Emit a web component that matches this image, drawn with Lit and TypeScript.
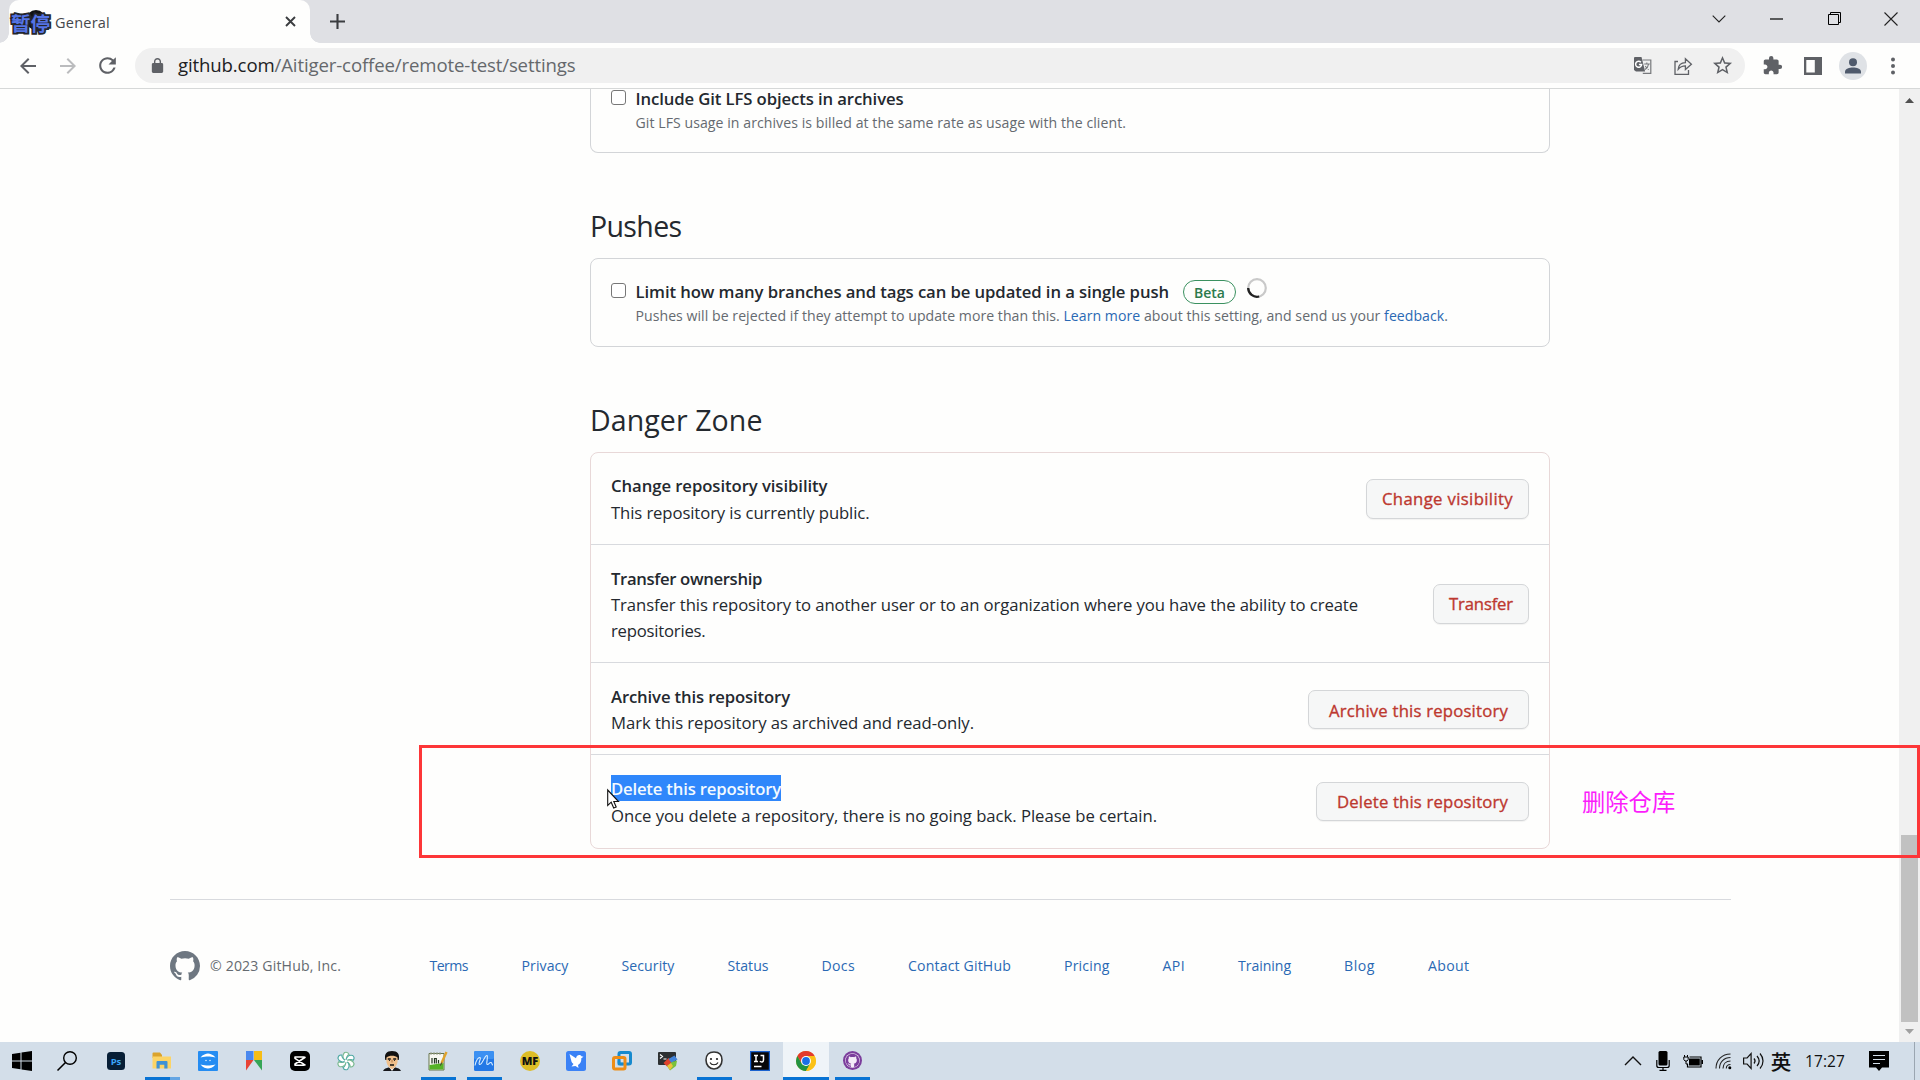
import { LitElement, html, css, svg } from "lit";
import { customElement, property } from "lit/decorators.js";
import { classMap } from "lit/directives/class-map.js";

/* A run of text whose tracking is tuned so that it takes a given width. */
@customElement("fit-text")
class FitText extends LitElement {
  @property({ type: Number }) w = 0;
  static styles = css`
    :host { display: inline-block; white-space: nowrap; }
  `;
  render() {
    return html`<slot></slot>`;
  }
  firstUpdated() {
    requestAnimationFrame(() => this.fit());
    this.fit();
  }
  fit() {
    const chars = (this.textContent ?? "").trim().length;
    if (!this.w || !chars) return;
    this.style.letterSpacing = "0px";
    const natural = this.getBoundingClientRect().width;
    this.style.letterSpacing = `${(this.w - natural) / chars}px`;
  }
}

const icon = (w: number, h: number, body: unknown, vb = `0 0 ${w} ${h}`) =>
  html`<svg class="icon" width=${w} height=${h} viewBox=${vb} fill="none">${body}</svg>`;

const octocat = "M8 0C3.58 0 0 3.58 0 8c0 3.54 2.29 6.53 5.47 7.59.4.07.55-.17.55-.38 0-.19-.01-.82-.01-1.49-2.01.37-2.53-.49-2.69-.94-.09-.23-.48-.94-.82-1.13-.28-.15-.68-.52-.01-.53.63-.01 1.08.58 1.23.82.72 1.21 1.87.87 2.33.66.07-.52.28-.87.51-1.07-1.78-.2-3.64-.89-3.64-3.95 0-.87.31-1.59.82-2.15-.08-.2-.36-1.02.08-2.12 0 0 .67-.21 2.2.82.64-.18 1.32-.27 2-.27s1.36.09 2 .27c1.53-1.04 2.2-.82 2.2-.82.44 1.1.16 1.92.08 2.12.51.56.82 1.27.82 2.15 0 3.07-1.87 3.75-3.65 3.95.29.25.54.73.54 1.48 0 1.07-.01 1.93-.01 2.2 0 .21.15.46.55.38A8.01 8.01 0 0 0 16 8c0-4.42-3.58-8-8-8z";

const nav = {
  back: icon(24, 24, svg`<path fill="#5f6166" d="M20 11H7.83l5.59-5.59L12 4l-8 8 8 8 1.41-1.41L7.83 13H20v-2z"/>`),
  forward: icon(24, 24, svg`<path fill="#bbbcbe" d="M12 4l-1.41 1.41L16.17 11H4v2h12.17l-5.58 5.59L12 20l8-8z"/>`),
  reload: icon(25, 25, svg`<path fill="#5f6166" d="M17.65 6.35A7.958 7.958 0 0012 4c-4.42 0-7.99 3.58-7.99 8s3.57 8 7.99 8c3.73 0 6.84-2.55 7.73-6h-2.08A5.99 5.99 0 0112 18c-3.31 0-6-2.69-6-6s2.69-6 6-6c1.66 0 3.14.69 4.22 1.78L13 11h7V4l-2.35 2.35z"/>`, "0 0 24 24"),
  lock: icon(17, 17, svg`<path fill="#5f6166" d="M18 8h-1V6c0-2.76-2.24-5-5-5S7 3.240 7 6v2H6c-1.100 0-2 .9-2 2v10c0 1.100.9 2 2 2h12c1.100 0 2-.9 2-2V10c0-1.100-.9-2-2-2zM9 6c0-1.660 1.340-3 3-3s3 1.340 3 3v2H9V6z"/>`, "0 1 24 21"),
};

const omniActions = [
  icon(20, 20, svg`
    <path d="M9.500 4h8.300v13.300H9.800" stroke="#77797c" stroke-width="1.200"/>
    <path fill="#5f6166" d="M1.500 1h7l3.600 14.500H3L1 14V1.500z"/>
    <path d="M7.900 6.300A3 3 0 1 0 8.600 8.600H5.900" stroke="#fff" stroke-width="1.500"/>
    <path d="M11.200 8h5.600M13.800 6.500V8M12 13.500c2-1.200 3.200-3 3.500-5.300M12.300 10c.8 1.500 2 2.800 3.500 3.600" stroke="#77797c" stroke-width="1.100"/>`),
  icon(20, 20, svg`
    <path d="M5 5.500H2v12.800h13.500V14" stroke="#5f6166" stroke-width="1.300"/>
    <path d="M5.200 13.300c.3-4.400 3-6.600 7.200-6.700V2.800l6 5.400-6 5.400V9.900c-3.200 0-5.300 1-7.200 3.400z" stroke="#5f6166" stroke-width="1.300"/>`),
  icon(21, 21, svg`<path fill="#5f6166" d="M22 9.240l-7.190-.62L12 2 9.190 8.630 2 9.240l5.460 4.730L5.820 21 12 17.270 18.180 21l-1.630-7.030L22 9.240zM12 15.400l-3.760 2.270 1-4.280-3.320-2.880 4.380-.38L12 6.100l1.710 4.040 4.380.38-3.320 2.880 1 4.280L12 15.400z"/>`, "1 1 22 22"),
];

const toolbarActions = [
  icon(21, 21, svg`<path fill="#5f6166" d="M20.500 11H19V7c0-1.100-.9-2-2-2h-4V3.500a2.500 2.500 0 0 0-5 0V5H4c-1.100 0-1.990.9-1.990 2v3.800H3.500c1.490 0 2.700 1.210 2.700 2.700s-1.210 2.700-2.700 2.700H2V20c0 1.100.9 2 2 2h3.800v-1.500c0-1.490 1.210-2.700 2.700-2.700s2.700 1.210 2.700 2.700V22H17c1.100 0 2-.9 2-2v-4h1.500a2.500 2.500 0 0 0 0-5z"/>`, "0 0 24 24"),
  icon(18, 18, svg`<path fill="#5f6166" fill-rule="evenodd" d="M0 0h18v18H0zM2.300 3v12.500h8.500V3z"/>`),
  icon(28, 28, svg`<circle cx="14" cy="14" r="14" fill="#dfe2e6"/><circle cx="14" cy="10.200" r="4" fill="#4f5a6c"/><path fill="#4f5a6c" d="M6 21.500v-1.700c0-3 4.500-4.300 8-4.300s8 1.300 8 4.300v1.700z"/>`),
  icon(4, 18, svg`<g fill="#5f6166"><circle cx="2" cy="2.500" r="2"/><circle cx="2" cy="9" r="2"/><circle cx="2" cy="15.500" r="2"/></g>`),
];

const windowControls = [
  icon(14, 8, svg`<path d="M.7.700L7 7 13.300.700" stroke="#222" stroke-width="1.100"/>`),
  icon(13, 2, svg`<path d="M0 1h13" stroke="#000" stroke-width="1.200"/>`),
  icon(13, 13, svg`<path d="M.5 2.500h10v10H.5zM2.500 2.500v-2h10v10h-2" stroke="#000"/>`),
  icon(14, 14, svg`<path d="M.5.500l13 13M13.500.500l-13 13" stroke="#222" stroke-width="1.100"/>`),
];

interface Task { art: unknown; state?: "open" | "grouped" | "active"; }

const tasks: Task[] = [
  { art: icon(18, 18, svg`<rect width="18" height="18" rx="3.500" fill="#071e36"/><text x="9" y="12.500" text-anchor="middle" font-family="Open Sans, sans-serif" font-weight="700" font-size="9.500" fill="#3aa5f8">Ps</text>`) },
  { state: "grouped", art: icon(20, 17, svg`<path fill="#dba32c" d="M.5 1.500A1 1 0 0 1 1.500.500h6.500l2 2.500v3H.5z"/><path fill="#fcd466" d="M.5 4.500h18.500v12H.5z"/><path fill="#3f92d6" d="M4.500 16.500V10a1 1 0 0 1 1-1h9a1 1 0 0 1 1 1v6.500h-3.200v-3.700H7.700v3.700z"/>`) },
  { art: icon(20, 20, svg`<rect width="20" height="20" rx="1" fill="#248cf2"/><path d="M2.500 6.500C5 3.500 8 2.500 10 2.500s5 1 7.500 4C14 5.800 12 5.500 10 5.500s-4 .3-7.500 1zM2.500 13.500c2.500 3 5.500 4 7.500 4s5-1 7.500-4c-3.500.7-5.500 1-7.500 1s-4-.3-7.500-1z" fill="#fff"/><circle cx="8" cy="9.500" r=".7" fill="#fff"/><circle cx="12" cy="9.500" r=".7" fill="#fff"/>`) },
  { art: icon(16, 20, svg`<path fill="#4a88ee" d="M0 0h7.500v9H0z"/><path fill="#f7bd16" d="M8 0h8v9H8z"/><path fill="#e84335" d="M0 9h7.500L0 19.500z"/><path fill="#35a556" d="M8 9h8v10.500z"/>`) },
  { art: icon(20, 20, svg`<rect width="20" height="20" rx="5" fill="#000"/><path d="M15.500 6L5 13v1.300h8.700V13M15.500 14.300L5 7.300V6h8.700v1.300" stroke="#fff" stroke-width="1.600" stroke-linejoin="round"/>`) },
  { art: icon(20, 20, svg`${[0, 60, 120, 180, 240, 300].map(
      (a) => svg`<path transform="rotate(${a} 10 10)" d="M10 9.500C6.500 8.500 6 4 8.500 1.500c2.500-.8 4 .5 4.500 2-2 .8-2.700 3-3 6z" fill="#fff" stroke=${a % 120 ? "#4fa9a4" : "#79b98f"} stroke-width="1.100"/>`)}<circle cx="10" cy="10" r="1.500" fill="#fff"/>`) },
  { art: icon(20, 20, svg`<path fill="#17171b" d="M1 20c1-2.500 3.500-3 5.500-3.500h7C15.500 17 18 17.500 19 20z"/><path fill="#fff" d="M7 16h6l-3 4z"/><path fill="#111" d="M3.300 9C2 3 4.500 0 10 0s8 3 6.700 9z"/><path fill="#efc08d" d="M4.500 6.500C7 4 13 4 15.500 6.500c.5 4 0 6.500-2 9L10 18.500l-3.500-3C4.500 13 4 10.500 4.500 6.500z"/><path d="M5.800 8h3M11.200 8h3M8 14h4" stroke="#111" stroke-width="1.300"/><path d="M10 8.500v3" stroke="#b77a47"/><circle cx="7.500" cy="9.500" r=".6" fill="#111"/><circle cx="12.500" cy="9.500" r=".6" fill="#111"/>`) },
  { state: "open", art: icon(20, 20, svg`<path fill="#f8f8f2" stroke="#66754c" d="M1 2.500h15V19H1z"/><path fill="#56b327" d="M1.500 14l14-2v6.500h-14z"/><path d="M3 1v3M6 1v3M9 1v3M12 1v3" stroke="#9ba090"/><path d="M4 12.500V7M6.500 12.500V7.500h1.800v5M10.500 12.500V9" stroke="#263822" stroke-width="1.200"/><path d="M18.500 1l-5 11" stroke="#e0a22c" stroke-width="2.400"/><path d="M13.700 11.500l-1.200 3" stroke="#433"/>`) },
  { state: "open", art: icon(20, 20, svg`<rect width="20" height="20" rx="1.500" fill="#2378e6"/><rect width="20" height="8" rx="1.500" fill="#3b90f2"/><path d="M1 14.500C2 9 4.500 6 6 6.500c1.800.8-2.500 6-.5 7C8 14.500 11 3.500 13 4.500c1.500 1-1.500 9 .5 9 1.500 0 2-2.500 3.500-2s.5 2.500 2 2.500" stroke="#d9edff" stroke-width="1.100"/>`) },
  { art: icon(20, 20, svg`<circle cx="10" cy="10" r="10" fill="#ddbd26"/><text x="10" y="14" text-anchor="middle" font-family="Open Sans, sans-serif" font-weight="800" font-size="11" fill="#111">MF</text>`) },
  { art: icon(20, 20, svg`<rect width="20" height="20" rx="2.500" fill="#3b82f6"/><path fill="#fff" d="M3.500 3l6.500 4.200C10.500 5 12 3.800 13.500 4c1 0 1.600.6 2 1.300l2 .4-2.200 1.500c.3 3-.8 5.300-3.300 6.800l.5 3-3-2-4 .5 2-2.500C5 11.500 5.500 9.500 4.800 8z"/>`) },
  { art: icon(20, 20, svg`<rect x="7" y="1.500" width="11.500" height="11.500" rx="1.500" stroke="#168ace" stroke-width="3"/><rect x="1.500" y="6.500" width="11.500" height="11.500" rx="1.500" stroke="#ee8d16" stroke-width="3"/><path d="M7 9.500V13h4" stroke="#168ace" stroke-width="2.500"/>`) },
  { art: icon(20, 20, svg`<rect y="1" width="18" height="13" rx="1" fill="#2d3032"/><path d="M2 3.500l2.500 2L2 7.500M5.500 8h3" stroke="#fff" stroke-width="1.200"/><path fill="#e0432d" d="M5.500 12l5-5 4 4-5 5z"/><path fill="#4383d8" d="M10.500 8l6-3.500 3 4-6 3.500z"/><path fill="#79c13c" d="M9 15l5-4 5-1.500-1 5.500-6 4.500z"/><path fill="#eac33b" d="M9 15l4-3 2 3-3 4z"/>`) },
  { state: "open", art: icon(18, 19, svg`<path d="M9 1c5 0 8 3 8 8s-3.500 9-8 9-8-4-8-9 3-8 8-8z" fill="#fff" stroke="#333" stroke-width="1.600"/><circle cx="6" cy="8" r="1.100" fill="#222"/><circle cx="12" cy="8" r="1.100" fill="#222"/><path d="M5 11.500c1.500 3 6.500 3 8 0" stroke="#222" stroke-width="1.200"/>`) },
  { art: icon(20, 20, svg`<path fill="#060608" stroke="#1b62cf" stroke-width="1.200" d="M.6.600h18.800v18.800H.6z"/><path d="M4 4.500h4M6 4.500v6M4 10.500h4M10.500 4.500h3v4.500c0 1.300-.8 2-1.800 2-.7 0-1.300-.3-1.700-1M4 15.500h7.500" stroke="#fff" stroke-width="1.500"/>`) },
  { state: "active", art: icon(20, 20, svg`<circle cx="10" cy="10" r="10" fill="#fbc116"/><path fill="#e33b2e" d="M1.340 5A10 10 0 0 1 18.660 5H10L5.670 12.500z"/><path fill="#229342" d="M1.340 5A10 10 0 0 0 10 20l4.330-7.500H5.670z"/><path fill="#fbc116" d="M18.660 5A10 10 0 0 1 10 20l4.330-7.500L10 5z"/><circle cx="10" cy="10" r="5" fill="#fff"/><circle cx="10" cy="10" r="3.900" fill="#1a6fe6"/>`) },
  { state: "open", art: icon(19, 19, svg`<circle cx="9.500" cy="9.500" r="9.500" fill="#7b3d9c"/><circle cx="9.500" cy="9.500" r="7.300" fill="#f4ecf8"/><g transform="translate(2.700 2.700) scale(.85)"><path fill="#7b3d9c" d=${octocat}/></g>`) },
];

const tray = {
  up: icon(18, 10, svg`<path d="M1 9l8-8 8 8" stroke="#111" stroke-width="1.400"/>`),
  mic: icon(14, 20, svg`<rect x="2.500" width="9" height="14.500" rx="1.500" fill="#000"/><path d="M.8 9v5.500c0 1.200.7 2 2 2h8.400c1.300 0 2-.8 2-2V9M7 16.500v3M3.500 19.300h7" stroke="#000" stroke-width="1.200"/>`),
  battery: icon(20, 13, svg`<path d="M6.500 2h11.500v10H4.500V9" stroke="#000" stroke-width="1.200"/><path fill="#000" d="M6 3.500h10.800v7H6zM18.500 5h1.500v4h-1.500z"/><path d="M1.500 0v2M4.500 0v2M.8 2h4.400v2.500L4 6H2L.8 4.500zM3 6v3h2" stroke="#000"/>`),
  wifi: icon(17, 17, svg`<path d="M1 15.500C1 7 7 1 15.500 1M4.500 15.500C4.500 9 9 4.500 15.500 4.500M8 15.500c0-4.500 3-7.500 7.500-7.500M11.300 15.500c0-2.500 1.700-4 4.200-4" stroke="#222" stroke-width="1.100"/><circle cx="14.800" cy="14.800" r="1.500" fill="#000"/>`),
  sound: icon(21, 18, svg`<path d="M.6 6h3.500l4-4.500v15l-4-4.500H.6z" stroke="#111" stroke-width="1.200"/><path d="M11 6.500c1.300 1.500 1.300 3.500 0 5M14 4c2.600 3 2.600 7 0 10M17 1.500c4 4.500 4 10.500 0 15" stroke="#111" stroke-width="1.200"/>`),
  note: icon(20, 20, svg`<path fill="#000" d="M0 0h20v16.500h-7L10 20l-3-3.500H0z"/><path d="M4 4.500h12M4 8.500h12M4 12.500h7" stroke="#d3dee9" stroke-width="1.200"/>`),
};

const dangerRows = [
  { title: "Change repository visibility", tw: 216.5, lines: [["This repository is currently public.", 258.5]], button: "Change visibility", bw: 131, size: "first" },
  { title: "Transfer ownership", tw: 151, lines: [["Transfer this repository to another user or to an organization where you have the ability to create", 747], ["repositories.", 94.5]], button: "Transfer", bw: 64, size: "tall" },
  { title: "Archive this repository", tw: 179, lines: [["Mark this repository as archived and read-only.", 363]], button: "Archive this repository", bw: 179, size: "mid" },
  { title: "Delete this repository", tw: 170, lines: [["Once you delete a repository, there is no going back. Please be certain.", 546]], button: "Delete this repository", bw: 171, size: "last" },
] as const;

/* label, text width, gap that follows */
const footerLinks: [string, number, number][] = [
  ["Terms", 38.500, 53.500], ["Privacy", 47, 53], ["Security", 53, 53], ["Status", 41, 53],
  ["Docs", 33.500, 53], ["Contact GitHub", 103, 53], ["Pricing", 45.500, 53], ["API", 22.500, 53],
  ["Training", 53, 53], ["Blog", 31, 53], ["About", 41.500, 0],
];

@customElement("app-root")
class AppRoot extends LitElement {
  static styles = css`
    :host {
      display: flex; flex-direction: column; position: relative;
      width: 1920px; height: 1080px; overflow: hidden;
      background: #fefefd; color: #24292f;
      font-family: "Open Sans", "Noto Sans", "Noto Sans CJK SC", sans-serif;
    }
    * { box-sizing: border-box; }
    .icon { display: block; flex: none; overflow: visible; }
    .cell { display: flex; align-items: center; justify-content: center; flex: none; }

    .strip { display: flex; height: 43px; flex: none; background: #dfe0e4; padding-left: 9px; }
    .tab {
      position: relative; display: flex; align-items: center; width: 301px; height: 43px;
      background: #fefefd; border-radius: 10px 10px 0 0; padding: 0 14px 7px 2px;
    }
    .tab::before, .tab::after {
      content: ""; position: absolute; bottom: 0; width: 10px; height: 10px;
    }
    .tab::before { left: -10px; background: radial-gradient(circle at 0 0, #dfe0e4 9.500px, #fefefd 10px); }
    .tab::after { right: -10px; background: radial-gradient(circle at 100% 0, #dfe0e4 9.500px, #fefefd 10px); }
    .favicon {
      position: relative; width: 40px; height: 24px; margin: 9px 4px 0 0; flex: none;
      font: 700 19.500px/23px "Noto Sans CJK SC", sans-serif; color: #5474e6;
      -webkit-text-stroke: 3.500px #24262c; paint-order: stroke fill; white-space: nowrap;
    }
    .favicon::before {
      content: ""; position: absolute; left: 15px; top: -1px; width: 20px; height: 20px;
      border-radius: 50%; background: #101114; z-index: 0;
    }
    .favicon span { position: relative; z-index: 1; }
    .tabname { flex: 1; font-size: 14.500px; line-height: 20px; color: #45474b; padding-top: 10px; }
    .tabclose { padding-top: 7px; }
    .newtab { width: 54px; height: 43px; }
    .grow { flex: 1; }
    .win { width: 57.300px; height: 37px; }

    .toolbar {
      display: flex; align-items: center; height: 46px; flex: none;
      padding: 0 7.500px; border-bottom: 1px solid #d6d8d8;
    }
    .tool { width: 40px; height: 40px; }
    .omnibox {
      display: flex; align-items: center; flex: 1; height: 35px; margin: 0 7.500px;
      background: #f0f0f0; border-radius: 18px; padding: 0 2.500px 0 14px;
    }
    .url { flex: 1; padding: 0 0 2px 12px; font-size: 18.600px; line-height: 26px; color: #65686c; }
    .url b { font-weight: 400; color: #202124; }

    .view { display: flex; height: 953px; flex: none; }
    .page { flex: 1; display: flex; flex-direction: column; }
    .column { width: 960px; margin-left: 590px; flex: none; }
    .box { border: 1px solid #d3d5d8; border-radius: 8px; }
    .option { display: grid; grid-template-columns: 15px 1fr; column-gap: 9.500px; padding-left: 20px; }
    .option.cut { border-top: 0; border-radius: 0 0 8px 8px; height: 64px; }
    .option.full { height: 89px; padding-top: 23px; }
    .check {
      appearance: none; margin: 1px 0 0; width: 15px; height: 15px;
      border: 1.300px solid #777; border-radius: 3px; background: #fff;
    }
    .label { display: flex; height: 20px; font-size: 16.700px; line-height: 20px; font-weight: 600; }
    .hint { font-size: 14.100px; line-height: 20px; color: #656a70; margin-top: 4px; }
    .pill {
      display: flex; justify-content: center; width: 53px; height: 24px; margin: -2px 11px 0 14px;
      border: 1.300px solid #3b9160; border-radius: 12px; color: #2c7a4c; font-size: 14px; line-height: 23px;
    }
    .spin { margin-top: -4px; }
    a { color: #2a69b4; text-decoration: none; }
    h2 { margin: 52px 0 11px; font-size: 28.500px; line-height: 42px; height: 42px; font-weight: 400; }

    .danger { border-color: #e8d8d8; }
    .row {
      display: flex; justify-content: space-between; align-items: center;
      padding: 0 20px; border-top: 1px solid #d8dade; font-size: 16.700px; line-height: 26px;
    }
    .row.first { border-top: 0; height: 91px; }
    .row.tall { height: 118px; }
    .row.mid { height: 92px; }
    .row.last { height: 94px; }
    .copy { display: flex; flex-direction: column; align-self: flex-start; align-items: flex-start; padding-top: 21px; }
    .first .copy { padding-top: 20px; gap: 1px; }
    .title { font-weight: 600; height: 26px; }
    .copy div { height: 26px; }
    .last .copy { padding-top: 20px; gap: 1px; }
    .last .copy div { line-height: 27px; }
    .selected { background: #2f87fb; color: #f3faff; }
    button {
      display: flex; justify-content: center; align-items: center; height: 40px; padding: 0 15px;
      border: 1px solid #d4d6d8; border-radius: 7px; background: #f6f7f7; color: #bd382f;
      box-shadow: 0 1px 1px rgba(0, 0, 0, 0.05); font: 500 16.700px/26px "Open Sans", sans-serif;
      -webkit-text-stroke: 0.350px #bd382f;
    }
    .mid button, .last button { height: 39px; padding: 2px 20px 0; }
    .mid button { margin-top: 2px; }
    .last button { padding-top: 0; }

    footer {
      display: flex; align-items: center; width: 1561px; margin: 50px 0 0 170px; flex: none;
      border-top: 1px solid #d8dade; padding-top: 50px; font-size: 14.100px; line-height: 30px; color: #656a70;
    }
    .copyright { margin: 1px 88.500px 0 10px; width: 131px; }
    .links { display: flex; margin-top: 1px; }

    .scroll {
      display: flex; flex-direction: column; align-items: center; width: 21px; background: #f0f0f0;
      padding: 9px 0 8px;
    }
    .track { flex: 1; display: flex; align-items: flex-end; padding-bottom: 7px; }
    .thumb { width: 17px; height: 187px; background: #c1c1c1; }

    .taskbar { display: flex; align-items: stretch; height: 38px; flex: none; background: #d3dee9; }
    .sys { width: 45px; padding: 0 1px 1px 0; }
    .apps { display: flex; margin-left: 3px; }
    .task { width: 46px; padding-bottom: 1px; background-repeat: no-repeat; background-position: 6px 100%; background-size: 35px 3px; }
    .task.open { background-image: linear-gradient(#0873d4, #0873d4); }
    .task.grouped { background-image: linear-gradient(90deg, #0873d4 25px, #64a5e3 25px); }
    .task.active { background-color: #eff4f8; background-image: linear-gradient(#0873d4, #0873d4); background-size: 46px 3px; background-position: 0 100%; }
    .tray { display: flex; align-items: center; }
    .ime { width: 28px; text-align: center; font: 500 20.500px/36px "Noto Sans CJK SC", sans-serif; color: #111; }
    .clock { width: 64px; padding-left: 10px; font-size: 15.500px; line-height: 38px; color: #111; }
    .desk { width: 6px; height: 38px; border-left: 1px solid #9ba6b1; margin-left: 16px; }

    .callout {
      position: absolute; left: 419px; top: 745px; width: 1501px; height: 113px;
      border: 3px solid #fd3638;
    }
    .note {
      position: absolute; left: 1582px; top: 784px; white-space: nowrap;
      font: 400 23.300px/34px "Noto Sans CJK SC", sans-serif; color: #fb1dfb;
    }
    .cursor { position: absolute; left: 607px; top: 789px; }
  `;

  private browser() {
    return html`
      <div class="strip">
        <div class="tab">
          <div class="favicon"><span>暂停</span></div>
          <div class="tabname"><fit-text w="55">General</fit-text></div>
          <div class="tabclose">${icon(11, 11, svg`<path d="M1 1l9 9M10 1l-9 9" stroke="#3b3d40" stroke-width="1.900"/>`)}</div>
        </div>
        <div class="newtab cell">${icon(15, 15, svg`<path d="M7.500 0v15M0 7.500h15" stroke="#3b3d40" stroke-width="2.100"/>`)}</div>
        <div class="grow"></div>
        ${windowControls.map((i) => html`<div class="cell win">${i}</div>`)}
      </div>
      <div class="toolbar">
        <div class="cell tool">${nav.back}</div>
        <div class="cell tool">${nav.forward}</div>
        <div class="cell tool">${nav.reload}</div>
        <div class="omnibox">
          ${nav.lock}
          <div class="url"><fit-text w="397.5"><b>github.com</b>/Aitiger-coffee/remote-test/settings</fit-text></div>
          ${omniActions.map((i) => html`<div class="cell tool">${i}</div>`)}
        </div>
        ${toolbarActions.map((i) => html`<div class="cell tool">${i}</div>`)}
      </div>
    `;
  }

  private row(r: (typeof dangerRows)[number]) {
    return html`
      <div class=${classMap({ row: true, [r.size]: true })}>
        <div class="copy">
          <div class=${classMap({ title: true, selected: r.size === "last" })}><fit-text w=${r.tw}>${r.title}</fit-text></div>
          ${r.lines.map(([text, w]) => html`<div><fit-text w=${w}>${text}</fit-text></div>`)}
        </div>
        <button><fit-text w=${r.bw}>${r.button}</fit-text></button>
      </div>
    `;
  }

  render() {
    return html`
      ${this.browser()}
      <div class="view">
        <div class="page">
          <div class="column">
            <div class="box option cut">
              <input class="check" type="checkbox" />
              <div>
                <div class="label"><fit-text w="268">Include Git LFS objects in archives</fit-text></div>
                <div class="hint"><fit-text w="490.5">Git LFS usage in archives is billed at the same rate as usage with the client.</fit-text></div>
              </div>
            </div>
            <h2><fit-text w="91.5">Pushes</fit-text></h2>
            <div class="box option full">
              <input class="check" type="checkbox" />
              <div>
                <div class="label">
                  <fit-text w="533.5">Limit how many branches and tags can be updated in a single push</fit-text>
                  <span class="pill"><fit-text w="31">Beta</fit-text></span>
                  <span class="spin">${icon(20, 20, svg`<circle cx="10" cy="10" r="8.800" stroke="#c9c9c9" stroke-width="2.200"/><path d="M1.200 10a8.800 8.800 0 0 0 11 8.500" stroke="#222" stroke-width="2.300"/>`)}</span>
                </div>
                <div class="hint"><fit-text w="812.5">Pushes will be rejected if they attempt to update more than this. <a>Learn more</a> about this setting, and send us your <a>feedback</a>.</fit-text></div>
              </div>
            </div>
            <h2><fit-text w="172.5">Danger Zone</fit-text></h2>
            <div class="box danger">${dangerRows.map((r) => this.row(r))}</div>
          </div>
          <footer>
            ${icon(30, 30, svg`<path fill="#6e7781" d=${octocat}/>`, "0 0 16 16")}
            <span class="copyright"><fit-text w="131">© 2023 GitHub, Inc.</fit-text></span>
            <nav class="links">
              ${footerLinks.map(([label, w, gap]) => html`<a style="margin-right:${gap}px"><fit-text w=${w}>${label}</fit-text></a>`)}
            </nav>
          </footer>
        </div>
        <div class="scroll">
          ${icon(9, 5, svg`<path fill="#505050" d="M0 5L4.500 0 9 5z"/>`)}
          <div class="track"><div class="thumb"></div></div>
          ${icon(9, 5, svg`<path fill="#a0a0a0" d="M0 0l4.500 5L9 0z"/>`)}
        </div>
      </div>
      <div class="taskbar">
        <div class="cell sys">${icon(20, 20, svg`<path fill="#000" d="M0 3l8.500-1.300v7.800H0zM9.500 1.500L20 0v9.500H9.500zM0 10.500h8.500v7.800L0 17zM9.500 10.500H20V20L9.500 18.500z"/>`)}</div>
        <div class="cell sys">${icon(20, 20, svg`<circle cx="13" cy="7" r="6.300" stroke="#000" stroke-width="1.400"/><path d="M8.500 11.500L.5 19.500" stroke="#000" stroke-width="1.600"/>`)}</div>
        <div class="apps">
          ${tasks.map((t) => html`<div class="cell task ${t.state ?? ""}">${t.art}</div>`)}
        </div>
        <div class="grow"></div>
        <div class="tray">
          <div class="cell" style="width:30px">${tray.up}</div>
          <div class="cell" style="width:29px">${tray.mic}</div>
          <div class="cell" style="width:31px">${tray.battery}</div>
          <div class="cell" style="width:31px">${tray.wifi}</div>
          <div class="cell" style="width:28px">${tray.sound}</div>
          <div class="ime">英</div>
          <div class="clock"><fit-text w="40">17:27</fit-text></div>
          <div class="cell" style="width:39px">${tray.note}</div>
          <div class="desk"></div>
        </div>
      </div>
      <div class="callout"></div>
      <div class="note">删除仓库</div>
      <div class="cursor">${icon(13, 20, svg`<path d="M.7 1v15.500l3.500-3.300L6.700 19l2.500-1-2.400-5.500h4.700z" fill="#fff" stroke="#111" stroke-width="1.100"/>`)}</div>
    `;
  }
}
